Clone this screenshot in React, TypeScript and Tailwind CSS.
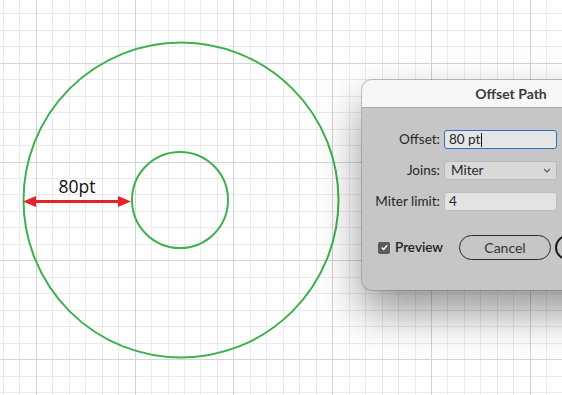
import React from "react";

const MINOR = 16.47;
const X0 = 2.8;
const Y0 = 13.3;

function Canvas() {
  const vlines: { x: number; major: boolean }[] = [];
  for (let i = 0; X0 + i * MINOR < 562; i++) {
    vlines.push({ x: Math.round(X0 + i * MINOR) + 0.5, major: (i - 2) % 6 === 0 });
  }
  const hlines: { y: number; major: boolean }[] = [];
  for (let i = 0; Y0 + i * MINOR < 395; i++) {
    hlines.push({ y: Math.round(Y0 + i * MINOR) + 0.5, major: (i - 3) % 6 === 0 });
  }
  return (
    <svg className="absolute inset-0" width={562} height={395} viewBox="0 0 562 395">
      <rect width={562} height={395} fill="#ffffff" />
      {vlines.filter((l) => !l.major).map((l, i) => (
        <line key={"v" + i} x1={l.x} x2={l.x} y1={0} y2={395} stroke="#ebebeb" strokeWidth={1} />
      ))}
      {hlines.filter((l) => !l.major).map((l, i) => (
        <line key={"h" + i} y1={l.y} y2={l.y} x1={0} x2={562} stroke="#ebebeb" strokeWidth={1} />
      ))}
      {vlines.filter((l) => l.major).map((l, i) => (
        <line key={"V" + i} x1={l.x} x2={l.x} y1={0} y2={395} stroke="#d4d4d4" strokeWidth={1} />
      ))}
      {hlines.filter((l) => l.major).map((l, i) => (
        <line key={"H" + i} y1={l.y} y2={l.y} x1={0} x2={562} stroke="#d4d4d4" strokeWidth={1} />
      ))}
      <circle cx={181} cy={200} r={157.5} fill="none" stroke="#3fb04f" strokeWidth={2} />
      <circle cx={180} cy={200} r={48} fill="none" stroke="#3fb04f" strokeWidth={2} />
      <line x1={33} x2={121} y1={201.5} y2={201.5} stroke="#e3242b" strokeWidth={3} />
      <polygon points="23,201.5 36,196 36,207" fill="#e3242b" />
      <polygon points="131,201.5 118,196 118,207" fill="#e3242b" />
      <text
        x={77}
        y={193}
        textAnchor="middle"
        fontFamily="'Open Sans', sans-serif"
        fontSize={17.5}
        fill="#111111"
      >
        80pt
      </text>
    </svg>
  );
}

function Dialog() {
  return (
    <div
      className="absolute left-[362px] top-[80px] w-[298px] h-[210px] rounded-[10px] overflow-hidden bg-[#c6c6c6] flex flex-col text-[#262626] shadow-[0_22px_45px_rgba(0,0,0,0.42),0_0_0_1px_rgba(0,0,0,0.18)]"
      style={{ fontFamily: "Lato, 'Liberation Sans', sans-serif" }}
    >
      <div className="h-[28px] shrink-0 bg-[#f7f7f7] border-b border-[#a8a8a8] flex items-center justify-center text-[14px] font-bold text-[#3a3a3a]">
        Offset Path
      </div>
      <div className="flex flex-col pt-[22px]">
        <div className="grid grid-cols-[78px_113px] gap-x-[4px] gap-y-[12px] text-[13.5px]">
          <div className="h-[19px] flex items-center justify-end">Offset:</div>
          <div className="h-[19px] rounded-[3px] bg-[#e5e5e5] border-[1.5px] border-[#2f6fc4] flex items-center pl-[4px]">
            80 pt<span className="inline-block w-px h-[14px] bg-[#111] ml-px" />
          </div>
          <div className="h-[19px] flex items-center justify-end">Joins:</div>
          <div className="h-[19px] rounded-[3px] bg-[#d9d9d9] border border-[#b8b8b8] flex items-center justify-between pl-[6px] pr-[5px]">
            <span>Miter</span>
            <svg width="8" height="5" viewBox="0 0 8 5">
              <path d="M1 1 L4 4 L7 1" fill="none" stroke="#555" strokeWidth="1.1" />
            </svg>
          </div>
          <div className="h-[19px] flex items-center justify-end">Miter limit:</div>
          <div className="h-[19px] rounded-[3px] bg-[#e3e3e3] border border-[#bdbdbd] flex items-center pl-[4px]">
            4
          </div>
        </div>
        <div className="flex items-center mt-[24px] pl-[16px]">
          <div className="w-[81px] flex items-center">
            <div className="w-[12px] h-[12px] rounded-[2px] bg-[#5a5a5a] flex items-center justify-center">
              <svg width="9" height="9" viewBox="0 0 9 9">
                <path d="M1.8 4.6 L3.7 6.5 L7.2 2.3" fill="none" stroke="#ffffff" strokeWidth="1.5" />
              </svg>
            </div>
            <span className="ml-[5px] text-[13.5px] font-semibold text-[#222]">Preview</span>
          </div>
          <div className="flex gap-[4px]">
            <div className="w-[92px] h-[25px] shrink-0 rounded-full border border-[#2a2a2a] flex items-center justify-center text-[14px] text-[#333]">
              Cancel
            </div>
            <div className="w-[92px] h-[25px] shrink-0 rounded-full border-2 border-[#1a1a1a] bg-[#c6c6c6]" />
          </div>
        </div>
      </div>
    </div>
  );
}

export default function App() {
  return (
    <div className="relative w-[562px] h-[395px] overflow-hidden bg-white">
      <Canvas />
      <Dialog />
    </div>
  );
}
